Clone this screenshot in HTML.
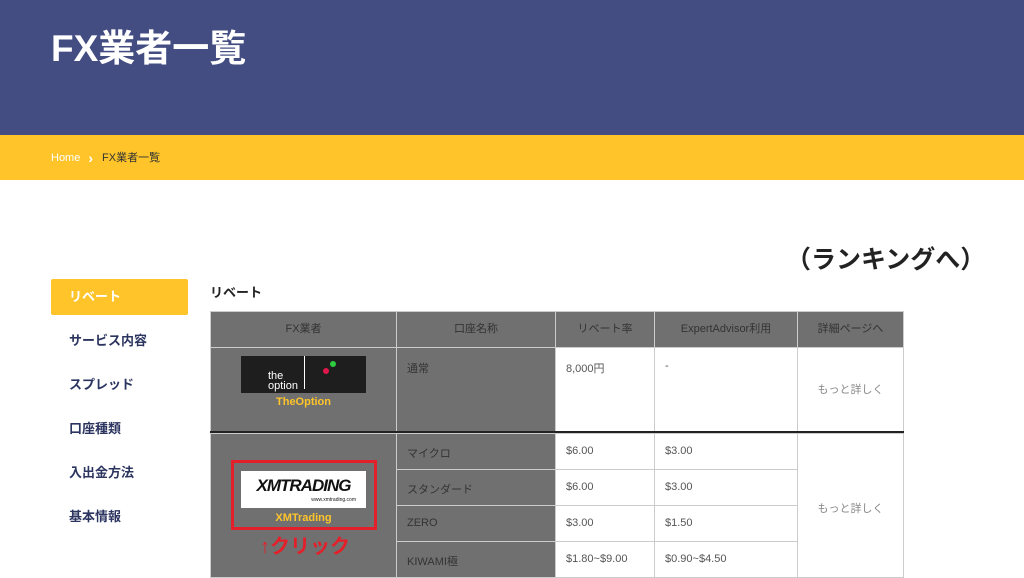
<!DOCTYPE html>
<html><head><meta charset="utf-8"><style>
*{margin:0;padding:0;box-sizing:border-box}
body{width:1024px;height:573px;overflow:hidden;background:#fff;font-family:"Liberation Sans","Noto Sans CJK JP",sans-serif;position:relative}
.a{position:absolute}
.hdr{left:0;top:0;width:1024px;height:135px;background:#434d82}
.title{left:51px;top:18px;color:#fff;font-size:37px;font-weight:bold}
.bc{left:0;top:135px;width:1024px;height:45px;background:#fec42a;font-size:11px}
.side{left:51px;font-size:13px;font-weight:bold;color:#2c3560;width:137px;height:36px;line-height:36px;padding-left:18px}
.c{position:absolute;border:1px solid #ccc;font-size:11px;color:#555}
.g{background:#707070;color:#333}
</style></head><body>
<div class="a hdr"></div>
<div class="a title">FX業者一覧</div>
<div class="a bc"><div class="a" style="left:51px;top:15px;height:16px;display:flex;align-items:center;line-height:16px"><span style="color:#fff">Home</span><span style="color:#fff;font-weight:bold;font-size:14px;margin:0 9px 0 8px">›</span><span style="color:#333">FX業者一覧</span></div></div>
<div class="a" style="left:786px;top:240px;font-size:25px;font-weight:bold;color:#222">（ランキングへ）</div>
<div class="a side" style="top:279px;background:#fec42a;color:#fff;border-radius:2px">リベート</div>
<div class="a side" style="top:323px">サービス内容</div>
<div class="a side" style="top:367px">スプレッド</div>
<div class="a side" style="top:411px">口座種類</div>
<div class="a side" style="top:455px">入出金方法</div>
<div class="a side" style="top:499px">基本情報</div>
<div class="a" style="left:210px;top:282px;font-size:13px;font-weight:bold;color:#222">リベート</div>
<div class="c g" style="left:210px;top:311px;width:187px;height:37px;text-align:center;line-height:35px">FX業者</div>
<div class="c g" style="left:396px;top:311px;width:160px;height:37px;text-align:center;line-height:35px">口座名称</div>
<div class="c g" style="left:555px;top:311px;width:100px;height:37px;text-align:center;line-height:35px">リベート率</div>
<div class="c g" style="left:654px;top:311px;width:144px;height:37px;text-align:center;line-height:35px">ExpertAdvisor利用</div>
<div class="c g" style="left:797px;top:311px;width:107px;height:37px;text-align:center;line-height:35px">詳細ページへ</div>
<div class="c g" style="left:210px;top:347px;width:187px;height:86px"></div>
<div class="a" style="left:241px;top:356px;width:125px;height:37px;background:#1e1e1e;color:#fff;font-size:11px;line-height:10px"><div class="a" style="left:27px;top:15px">the<br>option</div><div class="a" style="left:63px;top:0;width:1px;height:33px;background:#fff"></div><div class="a" style="left:82px;top:12px;width:6px;height:6px;border-radius:50%;background:#e0174a"></div><div class="a" style="left:89px;top:5px;width:6px;height:6px;border-radius:50%;background:#2ecc40"></div></div>
<div class="a" style="left:210px;top:396px;width:187px;text-align:center;color:#fec42a;font-size:11px;font-weight:bold">TheOption</div>
<div class="c g" style="left:396px;top:347px;width:160px;height:86px;padding:12px 10px">通常</div>
<div class="c" style="left:555px;top:347px;width:100px;height:86px;padding:12px 10px">8,000円</div>
<div class="c" style="left:654px;top:347px;width:144px;height:86px;padding:12px 10px">-</div>
<div class="c" style="left:797px;top:347px;width:107px;height:86px;text-align:center;line-height:84px;color:#888">もっと詳しく</div>
<div class="a" style="left:210px;top:431px;width:694px;height:2px;background:#222"></div>
<div class="c g" style="left:210px;top:433px;width:187px;height:145px"></div>
<div class="a" style="left:231px;top:460px;width:146px;height:70px;border:3px solid #e3202a"></div>
<div class="a" style="left:241px;top:471px;width:125px;height:37px;background:#fff;text-align:center"><div style="font-size:17px;font-weight:bold;font-style:italic;color:#111;letter-spacing:-1px;line-height:22px;margin-top:4px">XMTRADING</div><div style="font-size:5px;text-align:right;padding-right:10px;color:#111">www.xmtrading.com</div></div>
<div class="a" style="left:210px;top:512px;width:187px;text-align:center;color:#fec42a;font-size:11px;font-weight:bold">XMTrading</div>
<div class="a" style="left:260px;top:530px;color:#e3202a;font-size:20px;font-weight:bold">↑クリック</div>
<div class="c g" style="left:396px;top:433px;width:160px;height:37px;padding:11px 10px">マイクロ</div>
<div class="c g" style="left:396px;top:469px;width:160px;height:37px;padding:11px 10px">スタンダード</div>
<div class="c g" style="left:396px;top:505px;width:160px;height:37px;padding:11px 10px">ZERO</div>
<div class="c g" style="left:396px;top:541px;width:160px;height:37px;padding:11px 10px">KIWAMI極</div>
<div class="c" style="left:555px;top:433px;width:100px;height:37px;padding:11px 10px">$6.00</div>
<div class="c" style="left:555px;top:469px;width:100px;height:37px;padding:11px 10px">$6.00</div>
<div class="c" style="left:555px;top:505px;width:100px;height:37px;padding:11px 10px">$3.00</div>
<div class="c" style="left:555px;top:541px;width:100px;height:37px;padding:11px 10px">$1.80~$9.00</div>
<div class="c" style="left:654px;top:433px;width:144px;height:37px;padding:11px 10px">$3.00</div>
<div class="c" style="left:654px;top:469px;width:144px;height:37px;padding:11px 10px">$3.00</div>
<div class="c" style="left:654px;top:505px;width:144px;height:37px;padding:11px 10px">$1.50</div>
<div class="c" style="left:654px;top:541px;width:144px;height:37px;padding:11px 10px">$0.90~$4.50</div>
<div class="c" style="left:797px;top:433px;width:107px;height:145px;text-align:center;padding-top:66px;color:#888">もっと詳しく</div>
</body></html>
